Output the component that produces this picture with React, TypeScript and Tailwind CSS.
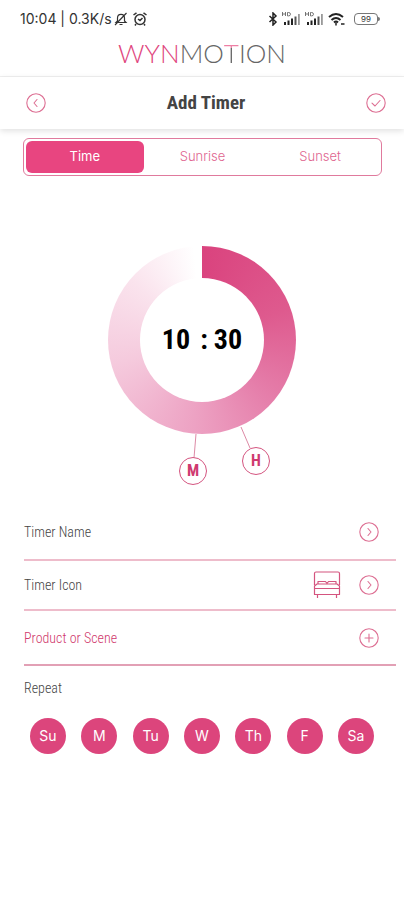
import { useState } from "react";

const tabs = ["Time", "Sunrise", "Sunset"];
const days = ["Su", "M", "Tu", "W", "Th", "F", "Sa"];

function CircleIcon({ d }: { d: string }) {
  return (
    <svg viewBox="0 0 20 20" className="w-5 h-5 block" fill="none" stroke="#dd6f93" strokeWidth="1.1" strokeLinecap="round" strokeLinejoin="round">
      <circle cx="10" cy="10" r="9.2" />
      <path d={d} />
    </svg>
  );
}

const chevronRight = "M9 6.5 12 10 9 13.5";
const chevronLeft = "M11 6.5 8 10 11 13.5";
const check = "M6 10.2 9 13 14 7.5";
const plus = "M10 6v8M6 10h8";

function Signal() {
  return (
    <svg viewBox="0 0 19 14" className="w-[19px] h-3.5">
      <path d="M0.5 0v4M3.5 0v4M0.5 2h3M5.5 .5h1q2 0 2 1.7t-2 1.7h-1z" fill="none" stroke="#555" strokeWidth="0.8" />
      <path d="M2 10h2v3H2zM5.5 8.5h2V13h-2zM9 6.5h2V13H9z" fill="#222" />
      <path d="M12.5 4.5h2V13h-2z" fill="#555" />
      <path d="M16 2h1.8v11H16z" fill="#999" />
    </svg>
  );
}

function StatusBar() {
  return (
    <div className="flex items-center h-[38px] pl-5 pr-6 font-['Inter',sans-serif] text-[#333]">
      <span className="text-sm">10:04 | 0.3K/s</span>
      <svg viewBox="0 0 14 14" className="w-3.5 h-3.5 ml-0.5" fill="none" stroke="#333" strokeWidth="1.2">
        <path d="M2 10.5h10L10.5 9V6c0-2.2-1.4-3.7-3.5-3.7S3.5 3.8 3.5 6v3zM5.5 12.5h3M1 13 12.5 1" />
      </svg>
      <svg viewBox="0 0 16 16" className="w-4 h-4 ml-1" fill="none" stroke="#333" strokeWidth="1.5">
        <circle cx="8" cy="8.5" r="5" />
        <path d="M1.5 4 4.5 1.8M14.5 4l-3-2.2M6 8l2 1.5L10.5 7M4 13l-1 1.5M12 13l1 1.5" />
      </svg>
      <div className="flex items-center gap-1 ml-auto">
        <svg viewBox="0 0 10 14" className="w-2.5 h-3.5" fill="none" stroke="#222" strokeWidth="1.5">
          <path d="M1.5 4 8 10 5 13V1l3 3-6.5 6" />
        </svg>
        <Signal />
        <Signal />
        <svg viewBox="0 0 18 14" className="w-[18px] h-3.5" fill="none" stroke="#222" strokeWidth="2">
          <path d="M1 5q7-6 14 0M3.5 8q4.5-4 9 0M6 10.5q2-2 4 0" />
          <path d="M8 10.5v3M13 12h3.5" strokeWidth="1.5" />
        </svg>
        <div className="flex items-center ml-1">
          <span className="flex items-center justify-center w-6 h-3 rounded border border-[#777] text-[8px] leading-none">99</span>
          <span className="w-0.5 h-1 bg-[#777] rounded-r" />
        </div>
      </div>
    </div>
  );
}

function BedIcon() {
  return (
    <svg viewBox="0 0 28 28" className="w-7 h-7" fill="none" stroke="#d4547f" strokeWidth="1.2" strokeLinejoin="round">
      <path d="M1.5 14V2.5Q1.5 1 3 1h22q1.5 0 1.5 1.5V14" />
      <path d="M1.5 23.5V15L4 13h20l2.5 2v8.5zM1.5 17.5h25" />
      <path d="M5 13v-2.5h7.5l1.5 2 1.5-2H23V13M4.5 23.500v3.500M23.5 23.5V27" />
    </svg>
  );
}

function Dial() {
  return (
    <div className="relative w-[188px] h-[188px] mx-auto mt-[70px] rounded-full bg-[conic-gradient(#da437e_0deg,#de5a8e_70deg,#e57eaa_130deg,#eda2c3_185deg,#f5cadd_255deg,#fae3ed_310deg,#ffffff_355deg)]">
      <div className="flex items-center justify-center absolute inset-8 rounded-full bg-white font-['Roboto_Condensed','Liberation_Sans',sans-serif] font-bold text-[28px] text-black">
        <span>10</span>
        <span className="ml-2.5 mr-1.5">:</span>
        <span>30</span>
      </div>
      <svg viewBox="0 0 188 240" className="absolute left-0 top-0 w-[188px] h-[240px]" stroke="#dd8aa6" strokeWidth="1">
        <path d="M88 188 86 212M133 181 142 202" />
      </svg>
      <button aria-label="Minutes" className="absolute left-[71px] top-[211px] w-7 h-7 rounded-full border border-[#d4547f] bg-white font-['Roboto_Condensed','Liberation_Sans',sans-serif] font-bold text-base leading-none text-[#cf3a70]">M</button>
      <button aria-label="Hours" className="absolute left-[134px] top-[201px] w-7 h-7 rounded-full border border-[#d4547f] bg-white font-['Roboto_Condensed','Liberation_Sans',sans-serif] font-bold text-base leading-none text-[#cf3a70]">H</button>
    </div>
  );
}

export default function App() {
  const [tab, setTab] = useState("Time");
  const [repeat, setRepeat] = useState(days);

  const toggleDay = (day: string) =>
    setRepeat((prev) => (prev.includes(day) ? prev.filter((d) => d !== day) : [...prev, day]));

  return (
    <div className="min-h-screen bg-white">
      <StatusBar />
      <div className="flex justify-center items-center h-[39px] pb-2 border-b border-[#f0f0f0] font-['Lato',sans-serif] font-light text-[26px] leading-none text-[#666]">
        <span className="text-[#e0457d]">WYN</span>
        <span>MO</span>
        <span className="bg-[linear-gradient(#ee7fa5_8px,#666_8px)] bg-clip-text text-transparent">T</span>
        <span>ION</span>
      </div>
      <header className="flex items-center justify-between h-[52px] pl-[26px] pr-[18px] shadow-[0_2px_6px_rgba(0,0,0,0.12)]">
        <button aria-label="Back"><CircleIcon d={chevronLeft} /></button>
        <h1 className="font-['Roboto_Condensed','Liberation_Sans',sans-serif] font-bold text-[19px] text-[#444]">Add Timer</h1>
        <button aria-label="Save"><CircleIcon d={check} /></button>
      </header>

      <main className="pt-[9px]">
        <div role="tablist" className="grid grid-cols-3 ml-[23px] mr-[22px] h-[38px] p-0.5 rounded-md border border-[#e07a9d] font-['Inter',sans-serif] text-[13px]">
          {tabs.map((name) => (
            <button
              key={name}
              role="tab"
              aria-selected={tab === name}
              onClick={() => setTab(name)}
              className={tab === name ? "rounded-md bg-[#e84580] text-white" : "rounded-md font-light text-[#e0658f]"}
            >
              {name}
            </button>
          ))}
        </div>

        <Dial />

        <div className="mt-[71px] ml-6 mr-2 font-['Roboto_Condensed','Liberation_Sans',sans-serif] font-light text-sm text-[#444]">
          <button className="flex items-center justify-between w-full h-14 pr-[17px] border-b-2 border-[#eebccb]">
            Timer Name
            <CircleIcon d={chevronRight} />
          </button>
          <button className="flex items-center w-full h-[50px] pr-[17px] border-b-2 border-[#eebccb]">
            <span className="mr-auto">Timer Icon</span>
            <span className="mr-[18px]"><BedIcon /></span>
            <CircleIcon d={chevronRight} />
          </button>
          <button className="flex items-center justify-between w-full h-[55px] pr-[17px] border-b-2 border-[#e2a0b5] text-[#d0386c]">
            Product or Scene
            <CircleIcon d={plus} />
          </button>
          <h2 className="mt-3">Repeat</h2>
        </div>

        <div className="flex justify-between mt-5 mx-[30px] font-['Inter',sans-serif] text-sm text-white">
          {days.map((day) => (
            <button
              key={day}
              aria-pressed={repeat.includes(day)}
              onClick={() => toggleDay(day)}
              className={repeat.includes(day) ? "w-9 h-9 rounded-full bg-[#dc457c]" : "w-9 h-9 rounded-full bg-[#eebccb]"}
            >
              {day}
            </button>
          ))}
        </div>
      </main>
    </div>
  );
}
